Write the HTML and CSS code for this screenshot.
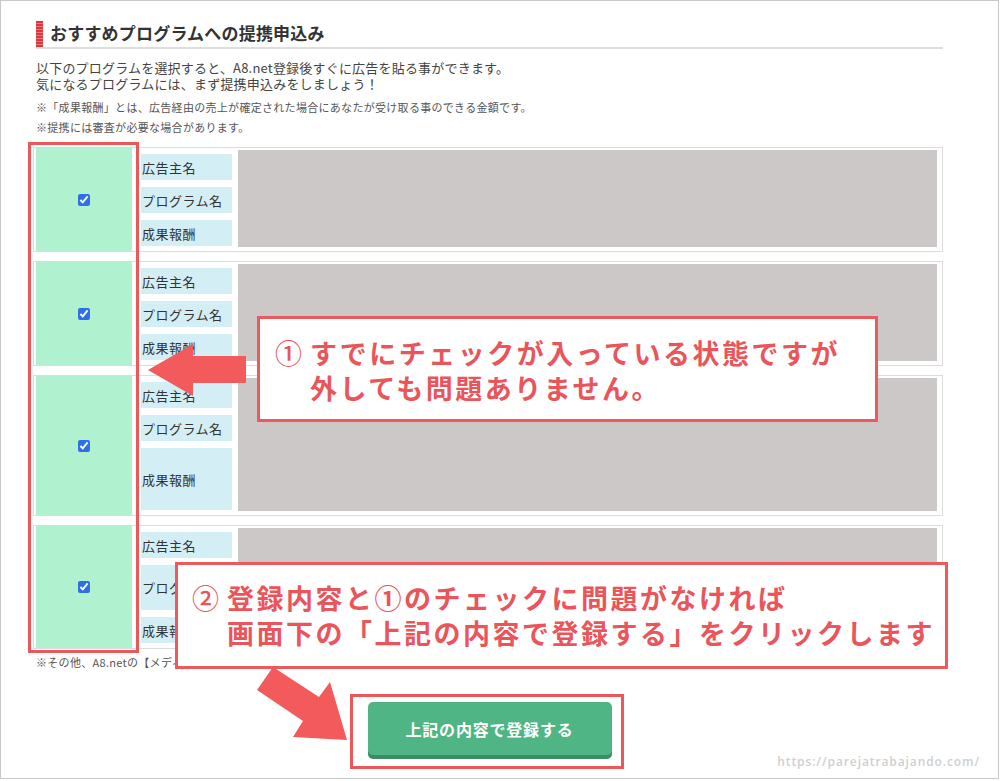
FILE: index.html
```html
<!DOCTYPE html>
<html lang="ja">
<head>
<meta charset="utf-8">
<title>おすすめプログラムへの提携申込み</title>
<link rel="stylesheet" href="styles.css">
</head>
<body>
<div class="frame">
  <div class="content">
    <h2 class="title"><span class="bar"></span>おすすめプログラムへの提携申込み</h2>
    <p class="lead">以下のプログラムを選択すると、A8.net登録後すぐに広告を貼る事ができます。<br>気になるプログラムには、まず提携申込みをしましょう！</p>
    <p class="note">※「成果報酬」とは、広告経由の売上が確定された場合にあなたが受け取る事のできる金額です。<br>※提携には審査が必要な場合があります。</p>

    <div class="list">
      <div class="card">
        <div class="pick"><input type="checkbox" checked></div>
        <div class="labels">
          <div class="lbl">広告主名</div>
          <div class="lbl">プログラム名</div>
          <div class="lbl">成果報酬</div>
        </div>
        <div class="value"></div>
      </div>
      <div class="card">
        <div class="pick"><input type="checkbox" checked></div>
        <div class="labels">
          <div class="lbl">広告主名</div>
          <div class="lbl">プログラム名</div>
          <div class="lbl">成果報酬</div>
        </div>
        <div class="value"></div>
      </div>
      <div class="card">
        <div class="pick"><input type="checkbox" checked></div>
        <div class="labels">
          <div class="lbl">広告主名</div>
          <div class="lbl">プログラム名</div>
          <div class="lbl tall">成果報酬</div>
        </div>
        <div class="value"></div>
      </div>
      <div class="card">
        <div class="pick"><input type="checkbox" checked></div>
        <div class="labels">
          <div class="lbl">広告主名</div>
          <div class="lbl mid">プログラム名</div>
          <div class="lbl">成果報酬</div>
        </div>
        <div class="value"></div>
      </div>
    </div>

    <p class="foot">※その他、A8.netの【メディア会員規約】に同意の上、ご登録ください。</p>

    <div class="submit">
      <button class="btn" type="button">上記の内容で登録する</button>
    </div>
  </div>

  <div class="col-outline"></div>

  <svg class="arrow-left" width="105" height="60" viewBox="0 0 105 60">
    <polygon points="3,30 48,4 48,16 101,16 101,43 48,43 48,56" fill="#f25a5b"/>
  </svg>

  <div class="callout callout-1">
    <div class="cl"><span class="num">①</span>すでにチェックが入っている状態ですが</div>
    <div class="cl indent">外しても問題ありません。</div>
  </div>

  <div class="callout callout-2">
    <div class="cl"><span class="num">②</span>登録内容と①のチェックに問題がなければ</div>
    <div class="cl indent">画面下の「上記の内容で登録する」をクリックします</div>
  </div>

  <svg class="arrow-diag" width="105" height="85" viewBox="0 0 105 85">
    <polygon points="23,7 69,37 80,22 97,80 43,77 53,61 7,30" fill="#f25a5b"/>
  </svg>

  <div class="btn-outline"></div>

  <div class="watermark">https://parejatrabajando.com/</div>
</div>
</body>
</html>
```

FILE: styles.css
```css
* { box-sizing: border-box; }

html, body {
  margin: 0;
  padding: 0;
  background: #ffffff;
}

body {
  font-family: "Noto Sans CJK JP", "Noto Sans", sans-serif;
  color: #333333;
}

.frame {
  position: relative;
  width: 999px;
  height: 779px;
  border: 1px solid #c9c9c9;
  overflow: hidden;
}

.content {
  padding: 18px 55px 0 35px;
}

.title {
  display: flex;
  align-items: center;
  gap: 7px;
  margin: 0;
  height: 28px;
  font-size: 17px;
  font-weight: 700;
  line-height: 28px;
  letter-spacing: 0.2px;
  color: #333333;
  border-bottom: 2px solid #dedede;
  box-sizing: content-box;
}

.bar {
  display: block;
  width: 7px;
  height: 26px;
  margin-top: 2px;
  background: repeating-linear-gradient(to bottom, #d9373c 0, #d9373c 2px, #ec7a7c 2px, #ec7a7c 3px);
}

.lead {
  margin: 11px 0 0;
  font-size: 13px;
  line-height: 16px;
  letter-spacing: 0.2px;
  color: #444444;
}

.note {
  margin: 5px 0 0;
  font-size: 11px;
  line-height: 20px;
  letter-spacing: 0.3px;
  color: #555555;
}

.list {
  display: flex;
  flex-direction: column;
  gap: 9px;
  margin: 10px 0 0 -3px;
}

.card {
  display: flex;
  border: 1px solid #dcdcdc;
  padding: 0 5px 0 2px;
}

.pick {
  width: 96px;
  flex: none;
  background: #b0f1cf;
  display: flex;
  align-items: center;
  justify-content: center;
}

.pick input {
  width: 12px;
  height: 12px;
  margin: 0;
  accent-color: #2e6fe6;
}

.labels {
  width: 91px;
  flex: none;
  margin-left: 9px;
  padding: 6px 0 5px;
  display: flex;
  flex-direction: column;
  gap: 7px;
}

.lbl {
  height: 26px;
  display: flex;
  align-items: center;
  padding-left: 1px;
  background: #d4eef6;
  font-size: 13px;
  letter-spacing: 0.5px;
  color: #333333;
  white-space: nowrap;
  overflow: hidden;
}

.lbl.tall { height: 62px; }
.lbl.mid { height: 45px; }

.value {
  flex: 1;
  margin: 2px 0 4px 6px;
  background: #cbc8c7;
}

.foot {
  margin: 5px 0 0;
  font-size: 11px;
  line-height: 16px;
  letter-spacing: 0.3px;
  color: #555555;
  white-space: nowrap;
}

.submit {
  display: flex;
  justify-content: center;
  margin-top: 32px;
}

.btn {
  width: 244px;
  height: 53px;
  border: none;
  border-radius: 5px;
  background: #50b584;
  box-shadow: 0 4px 0 #3b8c65;
  color: #ffffff;
  font-family: "Noto Sans CJK JP", sans-serif;
  font-size: 16px;
  font-weight: 700;
  letter-spacing: 0.8px;
}

/* overlays */
.col-outline {
  position: absolute;
  left: 27px;
  top: 141px;
  width: 111px;
  height: 511px;
  border: 3px solid #ec5759;
}

.arrow-left {
  position: absolute;
  left: 144px;
  top: 339px;
}

.arrow-diag {
  position: absolute;
  left: 249px;
  top: 659px;
}

.callout {
  position: absolute;
  background: #ffffff;
  border: 3px solid #ec5a5e;
  color: #e9555a;
  font-size: 27px;
  font-weight: 700;
  line-height: 35px;
  letter-spacing: 2.5px;
  white-space: nowrap;
}

.callout-1 {
  left: 256px;
  top: 315px;
  width: 621px;
  height: 106px;
  padding: 16px 0 0 15px;
}

.callout-2 {
  left: 174px;
  top: 561px;
  width: 773px;
  height: 107px;
  padding: 15px 0 0 14px;
}

.num {
  display: inline-block;
  width: 35px;
  letter-spacing: 0;
  font-weight: 500;
}

.indent {
  padding-left: 35px;
}

.btn-outline {
  position: absolute;
  left: 349px;
  top: 693px;
  width: 274px;
  height: 75px;
  border: 3px solid #ec5759;
}

.watermark {
  position: absolute;
  right: 18px;
  top: 752px;
  font-family: "Open Sans", "DejaVu Sans", sans-serif;
  font-size: 12px;
  font-weight: 600;
  letter-spacing: 0.9px;
  color: #cfcfcf;
}
```
